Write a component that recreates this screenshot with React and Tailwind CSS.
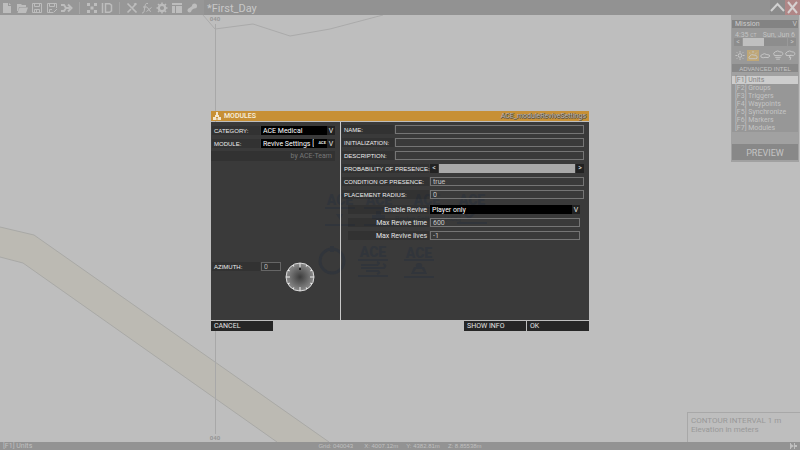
import React, { useState } from "react";

const units = [
  "[F1] Units",
  "[F2] Groups",
  "[F3] Triggers",
  "[F4] Waypoints",
  "[F5] Synchronize",
  "[F6] Markers",
  "[F7] Modules",
];

const tools = [
  {
    name: "New",
    icon: <path d="M2 1h5v3h3v7H2z M8 1l2 2H8z" fill="currentColor" />,
  },
  {
    name: "Open",
    icon: (
      <path d="M1 2h4l1 1h4v2H3l-1 4H1z M3.5 5.5H12l-2 5.5H1.5z" fill="currentColor" />
    ),
  },
  {
    name: "Save",
    icon: (
      <path
        d="M1.5 1.5h9v9h-9z M3.5 1.5v3h5v-3 M3.5 10.5v-3h5v3 M5.5 8v2"
        fill="none"
        stroke="currentColor"
      />
    ),
  },
  {
    name: "Save as",
    icon: (
      <path
        d="M7 10.5H1.5v-9h9V6 M3.5 1.5v3h5v-3 M3.5 10.5v-3H6 M7.5 10.5l3.500-3.500"
        fill="none"
        stroke="currentColor"
      />
    ),
  },
  {
    name: "Merge",
    icon: (
      <path
        d="M0 3h3l2 3h4 M0 9h3l2-3 M7 2.500L10.500 6 7 9.500"
        fill="none"
        stroke="currentColor"
        strokeWidth="2"
      />
    ),
  },
  null,
  {
    name: "Textures",
    icon: (
      <path
        d="M1 1h3v3H1z M8 1h3v3H8z M4.500 4.500h3v3h-3z M1 8h3v3H1z M8 8h3v3H8z"
        fill="currentColor"
      />
    ),
  },
  {
    name: "IDs",
    icon: (
      <path
        d="M1.500 1v10 M4.500 1.700h4l2 1.500v5.600l-2 1.500h-4z"
        fill="none"
        stroke="currentColor"
        strokeWidth="1.500"
      />
    ),
  },
  null,
  {
    name: "Tools",
    icon: (
      <path
        d="M1.500 1.500l9 9 M10.500 1.500l-4 4 M5 7l-3.500 3.500 M8 2.500l2-1"
        fill="none"
        stroke="currentColor"
        strokeWidth="1.700"
      />
    ),
  },
  {
    name: "Functions",
    icon: (
      <path
        d="M1 11c2 0 2-1 2.500-4l.5-3c.3-2 1-3 3-2.500 M2 5h4 M6 5.500c2 0 1.500 4 4 4 M10.500 5.500L5.500 9.500"
        fill="none"
        stroke="currentColor"
      />
    ),
  },
  {
    name: "Config",
    icon: (
      <>
        <circle cx="6" cy="6" r="3.200" fill="none" stroke="currentColor" strokeWidth="2.200" />
        <path
          d="M6 .5v2 M6 9.500v2 M.5 6h2 M9.500 6h2 M2 2l1.500 1.500 M8.500 8.500L10 10 M10 2L8.500 3.500 M3.500 8.500L2 10"
          stroke="currentColor"
          strokeWidth="1.500"
        />
      </>
    ),
  },
  {
    name: "Layout",
    icon: <path d="M1 1h10v2H1z M1 4h3v7H1z M5 4h6v7H5z" fill="currentColor" />,
  },
  {
    name: "Steam",
    icon: (
      <>
        <path d="M2.500 8.500L8 4.500" stroke="currentColor" strokeWidth="3" />
        <circle cx="8.500" cy="4" r="2.500" fill="currentColor" />
        <circle cx="3.500" cy="8.500" r="2" fill="currentColor" />
      </>
    ),
  },
];

const weather = [
  <g key="sun">
    <circle cx="6" cy="6" r="2" />
    <path d="M6 1v2 M6 9v2 M1 6h2 M9 6h2 M2.500 2.500l1 1 M8.500 8.500l1 1 M9.500 2.500l-1 1 M2.500 9.500l1-1" />
  </g>,
  <g key="partly">
    <path d="M2 9.500q-1.500-2 1-3 1-2.500 4-1 3-.5 3.500 2 .5 2-1.500 2z M6 1v2 M2 3l1 1 M10 3L9 4" />
  </g>,
  <path key="cloud" d="M2 8q-2-2 1-3 2-2 5 0 4 0 3 2-1 2-5 1-2 1-4 0z" />,
  <path key="rain" d="M2 6q-2-3 1-4 3-2 5 0 4 0 3 3-1 2-3 1H2z M3 8h6 M4 10h4" />,
  <path key="storm" d="M2 6q-2-3 1-4 3-2 5 0 4 0 3 3-1 2-3 1H2z M7 5L5 8h2l-1 3" />,
];

const Toolbar = () => (
  <header className="flex h-[15px] shrink-0 items-center bg-[#979797] text-[#bdbdbd]">
    <div className="flex w-[204px] items-center gap-[3px] pl-px">
      {tools.map((tool, i) =>
        tool ? (
          <button key={tool.name} aria-label={tool.name} className="h-3 w-3">
            <svg viewBox="0 0 12 12" className="h-3 w-3">
              {tool.icon}
            </svg>
          </button>
        ) : (
          <span key={i} className="mx-[3px] h-3 w-px bg-[#a6a6a6]" />
        )
      )}
    </div>
    <h1 className="h-full flex-1 bg-[#929292] pl-[3px] text-[11px] leading-[18px] text-[#c8c8c8]">
      *First_Day
    </h1>
    <button aria-label="Hide interface" className="h-[15px] w-[15px] bg-[#8b8b8b]">
      <svg viewBox="0 0 15 15" fill="none" stroke="#cfcfcf" strokeWidth="2">
        <path d="M1 11l6.500-7 6.500 7" />
      </svg>
    </button>
    <button aria-label="Close" className="h-[15px] w-[15px] bg-[#b08686]">
      <svg viewBox="0 0 15 15" fill="none" stroke="#d6d0d0" strokeWidth="2">
        <path d="M3 2l9 11 M12 2L3 13" />
      </svg>
    </button>
  </header>
);

const MapView = () => (
  <svg
    viewBox="0 15 800 427"
    preserveAspectRatio="xMidYMid slice"
    className="absolute inset-0 h-full w-full"
  >
    <path d="M0 227L34 235 329 442H277L23 263 0 257z" fill="#bcbab3" />
    <g fill="none" stroke="#a9a9a6" strokeWidth="1">
      <path d="M0 227L34 235 329 442 M0 257L23 263 277 442" />
      <path d="M203 15L215 29 253 24 290 36 330 29 383 15" stroke="#aaaaaa" />
      <path d="M215.500 24V434" stroke="#a8a8a8" />
    </g>
    <g className="font-bold" fontSize="6" fill="#969696" textAnchor="middle">
      <text x="215" y="21">040</text>
      <text x="215" y="440">040</text>
    </g>
  </svg>
);

const SidePanel = () => (
  <aside className="absolute top-0 right-px w-[68px] bg-[#a1a1a1] px-px pt-[5px] pb-[2px] text-[7px] leading-[8px] text-[#c4c4c4]">
    <div className="relative">
      <select
        aria-label="Phase"
        className="block h-2 w-full appearance-none bg-[#838383] pl-[3px] leading-[9px] text-[#cccccc]"
      >
        <option>Mission</option>
      </select>
      <span className="pointer-events-none absolute top-0 right-px">V</span>
    </div>
    <div className="bg-[#999999] pt-[3px]">
      <div className="flex h-[7px] justify-between px-[3px]">
        <span>
          4:35 <small className="text-[5px]">CT</small>
        </span>
        <span>Sun, Jun 6</span>
      </div>
      <div className="flex h-2 items-center gap-px px-[2px]">
        <button aria-label="Earlier" className="w-2 bg-[#8d8d8d]">&lt;</button>
        <input
          type="range"
          aria-label="Time of day"
          defaultValue="0"
          className="block h-2 w-full min-w-0 flex-1 appearance-none bg-[#8d8d8d] [&::-webkit-slider-thumb]:h-2 [&::-webkit-slider-thumb]:w-[21px] [&::-webkit-slider-thumb]:appearance-none [&::-webkit-slider-thumb]:bg-[#c0c0c0]"
        />
        <button aria-label="Later" className="w-2 bg-[#8d8d8d]">&gt;</button>
      </div>
      <div className="flex justify-between px-[2px] pt-1 pb-[3px]">
        {weather.map((icon, i) => (
          <button
            key={i}
            aria-label={"Weather " + (i + 1)}
            className={i === 1 ? "h-[11px] w-3 bg-[#bfa777]" : "h-[11px] w-3"}
          >
            <svg viewBox="0 0 12 12" fill="none" stroke="#c8c8c8" className="h-[11px] w-3">
              {icon}
            </svg>
          </button>
        ))}
      </div>
    </div>
    <button className="block h-2 w-full bg-[#888888] text-center font-['Liberation_Sans',sans-serif] text-[6px] leading-[10px]">
      ADVANCED INTEL
    </button>
    <ul className="mt-1 bg-[#979797] leading-[9px]">
      {units.map((unit, i) => (
        <li
          key={unit}
          className={
            i === 0 ? "h-2 bg-[#cdcdcd] pl-[3px] text-[#858585]" : "h-2 pl-[3px]"
          }
        >
          {unit}
        </li>
      ))}
    </ul>
    <button className="mt-3 block h-4 w-full bg-[#888888] text-[9px] leading-[18px]">
      PREVIEW
    </button>
  </aside>
);

const Label = ({ htmlFor, className, children }) => (
  <label
    htmlFor={htmlFor}
    className={"h-[9px] shrink-0 bg-black/12 leading-[10px] whitespace-nowrap " + className}
  >
    {children}
  </label>
);

const CapsLabel = ({ htmlFor, className, children }) => (
  <Label
    htmlFor={htmlFor}
    className={"pl-[2px] font-['Liberation_Sans',sans-serif] text-[6px] text-[#eeeeee] " + className}
  >
    {children}
  </Label>
);

const TextBox = ({ id, value }) => (
  <input
    id={id}
    defaultValue={value}
    className="h-[9px] min-w-0 flex-1 border border-[#757575] px-[2px] pt-px text-[#c4c4c4]"
  />
);

const Field = ({ id, label, wide, value }) => (
  <div className="flex gap-px">
    <CapsLabel htmlFor={id} className={wide ? "w-[87px]" : "w-[52px]"}>
      {label}
    </CapsLabel>
    <TextBox id={id} value={value} />
  </div>
);

const Select = ({ id, children, badge }) => (
  <div className="relative min-w-0 flex-1">
    <select
      id={id}
      className="block h-[9px] w-full appearance-none bg-black pr-[10px] pl-[2px] leading-[10px] text-white"
    >
      {children}
    </select>
    <span className="pointer-events-none absolute top-0 right-0 flex h-[9px] leading-[10px]">
      {badge && (
        <b className="bg-black pr-px pl-[4px] text-[4px] leading-[8px]">{badge}</b>
      )}
      <span className="w-2 bg-[#222222] text-center">V</span>
    </span>
  </div>
);

// faded module icons left over behind the dialog
const GhostIcons = () => (
  <svg
    viewBox="211 122 378 198"
    className="pointer-events-none absolute inset-0 h-full w-full"
    fill="#31353b"
    stroke="none"
  >
    <g className="font-black" fontSize="14" textAnchor="middle">
      <text x="340" y="205">ACE</text>
      <text x="379" y="205">ACE</text>
      <text x="427" y="205">ACE</text>
      <text x="472" y="205">ACE</text>
      <text x="373" y="257">ACE</text>
      <text x="419" y="258">ACE</text>
    </g>
    <path d="M325 207h30v2h-30z M325 224h30v2h-30z M364 207h30v2h-30z M364 224h30v2h-30z M412 207h30v2h-30z M457 222h30v2h-30z" />
    <path d="M358 259h30v2h-30z M358 275h30v2h-30z M404 259h30v2h-30z M404 276h30v2h-30z" />
    <path d="M336 214h7l-3 6z M376 211h5v4h4v4h-4v4h-5v-4h-4v-4h4z" />
    <path
      fillRule="evenodd"
      d="M416 267q-1-4 3-4t3 4h2l3 7h-16l3-7z M416 269l-2 3h10l-2-3z"
    />
    <g fill="none" stroke="#31353b" strokeWidth="2">
      <circle cx="332" cy="261" r="12" strokeWidth="3" />
      <path d="M332 246v6" strokeWidth="4" />
      <path d="M361 265h16q4-2 0-3 M361 268h23q3-3-1-4 M366 271h12q3 2-1 3 M464 213l5 5 10-9" />
    </g>
    <text x="428" y="221" fontSize="7" textAnchor="middle">
      Revive Settings [ACE]
    </text>
  </svg>
);

const ticks = [0, 30, 60, 90, 120, 150, 180, 210, 240, 270, 300, 330];

const Dial = () => (
  <svg viewBox="0 0 30 30" className="h-[30px] w-[30px]">
    <defs>
      <radialGradient id="dial">
        <stop offset="0" stopColor="#3c3c3c" />
        <stop offset="1" stopColor="#8c8c8c" />
      </radialGradient>
    </defs>
    <circle cx="15" cy="15" r="14" fill="url(#dial)" stroke="#d8d8d8" />
    {ticks.map((a) => (
      <path
        key={a}
        d={a % 90 ? "M15 1v2" : "M15 1v4"}
        stroke="#ececec"
        transform={"rotate(" + a + " 15 15)"}
      />
    ))}
    <path d="M14.500 7.500l.5-1.500.5 1.500z" fill="#111111" stroke="#111111" />
  </svg>
);

const ModulesDialog = () => {
  const [probability, setProbability] = useState(100);

  return (
    <form
      className="relative w-full max-w-[378px] text-[7px] text-[#e4e4e4]"
      onSubmit={(e) => e.preventDefault()}
    >
      <div className="flex h-[10px] items-center bg-[#c79036] pr-[3px] pl-[2px] leading-[10px]">
        <svg viewBox="0 0 8 8" className="mr-[3px] h-2 w-2" fill="#f3e6cf">
          <path d="M3 0h2v3H3z M2 3h4v2H2z M0 5h3v3H0z M5 5h3v3H5z M3.500 6h1v2h-1z" />
        </svg>
        <h2 className="flex-1 font-medium text-[#f8f0e0]">MODULES</h2>
        <span className="text-[#b9b5ac] [text-shadow:1px_0_#4a4a4a,0_1px_#4a4a4a]">
          ACE_moduleReviveSettings
        </span>
      </div>
      <div className="relative mt-px flex h-[198px] bg-[#3a3a3a]">
        <GhostIcons />
        <div className="relative flex w-[130px] shrink-0 flex-col border-r border-[#c8c8c8] pt-1">
          <div className="flex flex-col gap-1 pr-[5px] pl-px">
            <div className="flex h-[9px] gap-px">
              <CapsLabel htmlFor="category" className="w-[48px]">
                CATEGORY:
              </CapsLabel>
              <Select id="category">
                <option>ACE Medical</option>
              </Select>
            </div>
            <div className="flex h-[9px] gap-px">
              <CapsLabel htmlFor="module" className="w-[48px]">
                MODULE:
              </CapsLabel>
              <Select id="module" badge="ACE">
                <option>Revive Settings [ACE]</option>
              </Select>
            </div>
          </div>
          <p className="mt-[3px] mr-[5px] bg-black/12 pr-[3px] text-right leading-[10px] text-[#777777]">
            by ACE-Team
          </p>
          <div className="mt-auto mb-[28px] flex items-start gap-px pl-px">
            <CapsLabel htmlFor="azimuth" className="w-[48px]">
              AZIMUTH:
            </CapsLabel>
            <input
              id="azimuth"
              defaultValue="0"
              className="mr-[3px] h-[9px] w-[20px] border border-[#666666] bg-[#333333] px-[2px] pt-px text-[#b0b0b0]"
            />
            <Dial />
          </div>
        </div>
        <div className="relative flex min-w-0 flex-1 flex-col gap-1 pt-[3px] pr-[5px] pl-px">
          <Field id="name" label="NAME:" />
          <Field id="init" label="INITIALIZATION:" />
          <Field id="description" label="DESCRIPTION:" />
          <div className="flex h-[9px] gap-px">
            <CapsLabel htmlFor="probability" className="w-[87px]">
              PROBABILITY OF PRESENCE:
            </CapsLabel>
            <button
              type="button"
              aria-label="Decrease"
              className="w-2 bg-[#222222] leading-[9px]"
              onClick={() => setProbability(Math.max(0, probability - 10))}
            >
              &lt;
            </button>
            <input
              id="probability"
              type="range"
              value={probability}
              onChange={(e) => setProbability(Number(e.target.value))}
              className="block h-[9px] min-w-0 flex-1 appearance-none bg-[#a9a9a9] [&::-webkit-slider-thumb]:h-2 [&::-webkit-slider-thumb]:w-2 [&::-webkit-slider-thumb]:appearance-none [&::-webkit-slider-thumb]:bg-[#a9a9a9]"
            />
            <button
              type="button"
              aria-label="Increase"
              className="w-2 bg-[#222222] leading-[9px]"
              onClick={() => setProbability(Math.min(100, probability + 10))}
            >
              &gt;
            </button>
          </div>
          <Field id="condition" label="CONDITION OF PRESENCE:" wide value="true" />
          <Field id="radius" label="PLACEMENT RADIUS:" wide value="0" />
          <div className="mt-[2px] flex flex-col gap-1 pr-1 pl-[6px]">
            <div className="flex h-[9px] gap-px">
              <Label htmlFor="revive" className="w-[81px] pr-[2px] text-right">
                Enable Revive
              </Label>
              <Select id="revive">
                <option>Player only</option>
              </Select>
            </div>
            <div className="flex gap-px">
              <Label htmlFor="time" className="w-[81px] pr-[2px] text-right">
                Max Revive time
              </Label>
              <TextBox id="time" value="600" />
            </div>
            <div className="flex gap-px">
              <Label htmlFor="lives" className="w-[81px] pr-[2px] text-right">
                Max Revive lives
              </Label>
              <TextBox id="lives" value="-1" />
            </div>
          </div>
        </div>
      </div>
      <div className="mt-px flex gap-px text-left leading-[11px]">
        <button type="button" className="mr-auto h-[10px] w-[62px] bg-[#262626] pl-[3px] text-left">
          CANCEL
        </button>
        <button type="button" className="h-[10px] w-[62px] bg-[#262626] pl-[3px] text-left">
          SHOW INFO
        </button>
        <button className="h-[10px] w-[62px] bg-[#262626] pl-[3px] text-left">OK</button>
      </div>
    </form>
  );
};

const App = () => {
  return (
    <div className="flex h-screen flex-col overflow-hidden bg-[#bebebe] font-['Roboto',sans-serif]">
      <Toolbar />
      <main className="relative flex flex-1 items-center justify-center pb-[15px]">
        <MapView />
        <ModulesDialog />
        <SidePanel />
        <div className="absolute right-0 bottom-0 h-[30px] w-[113px] border-t border-l border-[#a8a8a8] pt-[3px] pl-[3px] text-[8px] leading-[9px] text-[#999999]">
          <p>CONTOUR INTERVAL 1 m</p>
          <p>Elevation in meters</p>
        </div>
      </main>
      <footer className="flex h-2 shrink-0 items-center justify-between bg-[#939393] px-[3px] text-[6px] leading-[8px] text-[#c0c0c0]">
        <span className="flex-1 text-[7px]">[F1] Units</span>
        <p className="flex gap-2 font-['Liberation_Sans',sans-serif]">
          <span className="mr-[3px]">Grid: 040043</span>
          <span>X: 4007.12m</span>
          <span>Y: 4382.81m</span>
          <span>Z: 8.85538m</span>
        </p>
        <span className="flex flex-1 justify-end">
          <svg viewBox="0 0 7 6" className="h-[6px] w-[7px]" fill="currentColor">
            <path d="M0 0h1v6H0z M1 1l3 2-3 2z M4 0h1v6H4z M5 2h2v2H5z" />
          </svg>
        </span>
      </footer>
    </div>
  );
};

export default App;
